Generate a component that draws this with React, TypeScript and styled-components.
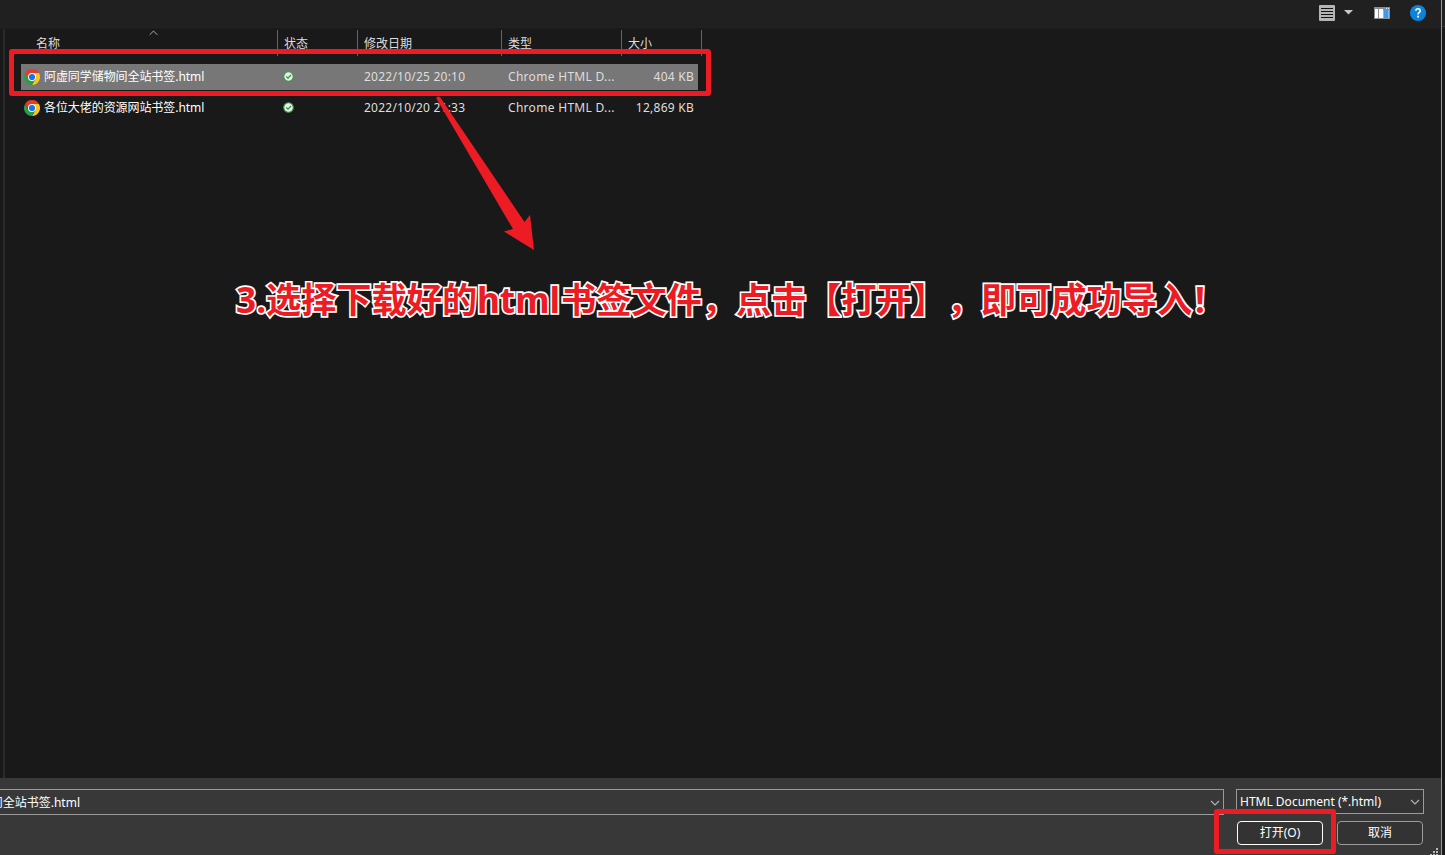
import React from 'react';
import styled, { createGlobalStyle } from 'styled-components';

const Global = createGlobalStyle`
  * { box-sizing: border-box; }
  body { margin: 0; background: #191919; overflow: hidden; }
`;

const Screen = styled.div`
  position: relative;
  display: flex;
  width: 1445px;
  height: 855px;
  overflow: hidden;
  background: #191919;
  color: #fff;
  font: 12px/16px 'Noto Sans', 'Noto Sans CJK SC', sans-serif;
  white-space: nowrap;
`;
const Dialog = styled.div`
  display: flex;
  flex-direction: column;
  width: 1442px;
  border-right: 1px solid #35b9e6;
`;
const Backdrop = styled.div`
  flex: 1;
  background: linear-gradient(#202020 26px, #333 26px, #333 27px, #191919 27px);
`;
const Toolbar = styled.div`
  display: flex;
  align-items: center;
  justify-content: flex-end;
  height: 29px;
  padding: 0 15px 3px 0;
  background: #202020;
  border-bottom: 1px solid #1c1c1c;
`;
const ViewButton = styled.div`
  display: flex;
  align-items: center;
  gap: 9px;
  margin-right: 21px;
`;
const PaneButton = styled.div`
  display: flex;
  margin-right: 20px;
`;
const Browser = styled.div`
  flex: 1;
  display: flex;
`;
const Splitter = styled.div`
  width: 6px;
  border-left: 3px solid #191919;
  border-right: 1px solid #191919;
  background: #2b2b2b;
`;
const FileList = styled.div`
  flex: 1;
  padding: 1px 0 0 15px;
`;
const Header = styled.div`
  position: relative;
  display: flex;
  height: 26px;
  margin-bottom: 8px;
`;
const HeadCell = styled.div<{ $w: number; $pad?: number }>`
  width: ${p => p.$w}px;
  padding: 6px 0 0 ${p => p.$pad ?? 6}px;
  border-right: 1px solid #636363;
  color: #dedede;
`;
const SortMark = styled.svg`
  position: absolute;
  left: 128px;
  top: 0;
`;
const Row = styled.div<{ $selected?: boolean }>`
  display: flex;
  align-items: center;
  width: 677px;
  height: 26px;
  margin-bottom: 5px;
  background: ${p => (p.$selected ? '#777' : 'transparent')};
  color: #dedede;
`;
const NameCell = styled.div`
  display: flex;
  align-items: center;
  gap: 4px;
  width: 262px;
  height: 25px;
  padding-left: 3px;
  color: #fff;
  letter-spacing: -0.07px;
`;
const Cell = styled.div<{ $w: number; $right?: boolean; $ls?: number }>`
  display: flex;
  justify-content: ${p => (p.$right ? 'flex-end' : 'flex-start')};
  width: ${p => p.$w}px;
  letter-spacing: ${p => p.$ls ?? 0}px;
`;
const StatusCell = styled.div`
  display: flex;
  width: 81px;
  padding-bottom: 1px;
`;
const Footer = styled.div`
  height: 77px;
  padding-top: 11px;
  background: #383838;
`;
const FieldRow = styled.div`
  display: flex;
  gap: 12px;
`;
const Combo = styled.div<{ $w: number; $h: number; $open?: boolean }>`
  display: flex;
  align-items: center;
  justify-content: space-between;
  width: ${p => p.$w}px;
  height: ${p => p.$h}px;
  padding: ${p => (p.$open ? '1px 3px 0 0' : '0 3px')};
  border: 1px solid #9b9b9b;
  border-left-width: ${p => (p.$open ? 0 : 1)}px;
  background: ${p => (p.$open ? '#383838' : '#333')};
`;
const ClippedName = styled.div`
  display: flex;
  justify-content: flex-end;
  width: 80px;
  overflow: hidden;
`;
const Actions = styled.div`
  display: flex;
  justify-content: flex-end;
  gap: 14px;
  padding: 6px 18px 0 0;
`;
const Button = styled.button<{ $primary?: boolean }>`
  display: flex;
  align-items: center;
  justify-content: center;
  width: 86px;
  height: 24px;
  padding: 0;
  border: 1px solid ${p => (p.$primary ? '#fff' : '#9b9b9b')};
  border-radius: 4px;
  background: #333;
  color: #fff;
  font: inherit;
`;
const Grip = styled.svg`
  position: absolute;
  left: 1430px;
  top: 848px;
`;
const Highlight = styled.div<{ $x: number; $y: number; $w: number; $h: number }>`
  position: absolute;
  left: ${p => p.$x}px;
  top: ${p => p.$y}px;
  width: ${p => p.$w}px;
  height: ${p => p.$h}px;
  border: 5px solid #ed1c24;
  border-radius: 3px;
`;
const Arrow = styled.svg`
  position: absolute;
  left: 420px;
  top: 80px;
`;
const Caption = styled.div`
  position: absolute;
  left: 236px;
  top: 273px;
  display: flex;
  color: #ed1c24;
  font: 700 35.2px/52px 'Noto Sans', 'Noto Sans CJK SC', sans-serif;
  -webkit-text-stroke: 3.4px #fff;
  paint-order: stroke fill;
  text-spacing-trim: space-all;
`;
const Part = styled.span<{ $w: number; $shift?: number }>`
  width: ${p => p.$w}px;
  padding-left: ${p => p.$shift ?? 0}px;
`;

const Chrome = () => (
  <svg width="16" height="16" viewBox="0 0 48 48">
    <path d="M24 12H44.8A24 24 0 0 1 24 48L34.4 30Z" fill="#fcc31e" />
    <path d="M3.2 12L13.6 30L34.4 30L24 48A24 24 0 0 1 3.2 12Z" fill="#2a9d48" />
    <path d="M3.2 12A24 24 0 0 1 44.8 12H24L13.6 30Z" fill="#e33b2e" />
    <circle cx="24" cy="24" r="12" fill="#fff" />
    <circle cx="24" cy="24" r="9.3" fill="#1a73e8" />
  </svg>
);
const Synced = () => (
  <svg width="11" height="11" viewBox="0 0 11 11">
    <circle cx="5.5" cy="5.5" r="4.8" fill="#e4f0e4" stroke="#38924a" strokeWidth="1.1" />
    <path d="M3.2 5.6L5 7.2L8 4" fill="none" stroke="#38924a" strokeWidth="1.3" />
  </svg>
);
const Chevron = () => (
  <svg width="10" height="6" viewBox="0 0 10 6">
    <path d="M1 1L5 5L9 1" fill="none" stroke="#b5b5b5" strokeWidth="1.1" />
  </svg>
);

const files = [
  { name: '阿虚同学储物间全站书签.html', date: '2022/10/25 20:10', size: '404 KB', selected: true },
  { name: '各位大佬的资源网站书签.html', date: '2022/10/20 21:33', size: '12,869 KB', selected: false },
];

export default function App() {
  return (
    <Screen>
      <Global />
      <Dialog>
        <Toolbar>
          <ViewButton>
            <svg width="16" height="16" viewBox="0 0 16 16">
              <rect width="16" height="16" rx="1" fill="#b4b4b4" />
              <path d="M2 3.5H14M2 6.5H14M2 9.5H14M2 12.5H14" stroke="#111" />
            </svg>
            <svg width="9" height="5" viewBox="0 0 9 5"><path d="M0 0H9L4.5 4.6Z" fill="#c8c8c8" /></svg>
          </ViewButton>
          <PaneButton>
            <svg width="16" height="12" viewBox="0 0 16 12">
              <rect width="16" height="12" fill="#8b8e91" />
              <path d="M1 2H4V11H1ZM5 2H9V11H5Z" fill="#fff" />
              <path d="M9 3H15V11H9Z" fill="#3d9be9" />
              <path d="M9.5 3V11M14.5 3V11" stroke="#7abdf4" />
              <path d="M12 1.5H13M14 1.5H15" stroke="#ddd" />
            </svg>
          </PaneButton>
          <svg width="16" height="16" viewBox="0 0 16 16">
            <circle cx="8" cy="8" r="8" fill="#0c84dc" />
            <path d="M5.9 5.7C5.9 3.1 10.2 3.1 10.2 5.7C10.2 7.4 8.1 7.3 8.1 9.5" fill="none" stroke="#fff" strokeWidth="1.6" />
            <rect x="7.2" y="10.7" width="1.8" height="1.8" fill="#fff" />
          </svg>
        </Toolbar>
        <Browser>
          <Splitter />
          <FileList>
            <Header>
              <HeadCell $w={257} $pad={15}>名称</HeadCell>
              <HeadCell $w={80}>状态</HeadCell>
              <HeadCell $w={144}>修改日期</HeadCell>
              <HeadCell $w={120}>类型</HeadCell>
              <HeadCell $w={80}>大小</HeadCell>
              <SortMark width="9" height="6" viewBox="0 0 9 6">
                <path d="M.7 4.8L4.5 1L8.3 4.8" fill="none" stroke="#aaa" />
              </SortMark>
            </Header>
            {files.map(f => (
              <Row key={f.name} $selected={f.selected}>
                <NameCell><Chrome />{f.name}</NameCell>
                <StatusCell><Synced /></StatusCell>
                <Cell $w={144} $ls={0.23}>{f.date}</Cell>
                <Cell $w={110} $ls={0.3}>Chrome HTML D...</Cell>
                <Cell $w={76} $right $ls={0.25}>{f.size}</Cell>
              </Row>
            ))}
          </FileList>
        </Browser>
        <Footer>
          <FieldRow>
            <Combo $w={1224} $h={26} $open>
              <ClippedName>间全站书签.html</ClippedName>
              <Chevron />
            </Combo>
            <Combo $w={188} $h={25}>
              HTML Document (*.html)
              <Chevron />
            </Combo>
          </FieldRow>
          <Actions>
            <Button $primary>打开(O)</Button>
            <Button>取消</Button>
          </Actions>
        </Footer>
      </Dialog>
      <Backdrop />
      <Grip width="9" height="8" viewBox="0 0 9 8">
        <path d="M6 1H8M3 4H5M6 4H8M0 7H2M3 7H5M6 7H8" stroke="#b8b8b8" strokeWidth="2" />
      </Grip>
      <Highlight $x={9} $y={49} $w={702} $h={47} />
      <Highlight $x={1214} $y={809} $w={122} $h={45} />
      <Arrow width="130" height="180" viewBox="0 0 130 180">
        <path d="M16.3 18.5Q16.5 15.5 20 17L104.5 142L110 135L114 170L84 151.5L93 149Z" fill="#ed1c24" />
      </Arrow>
      <Caption>
        <Part $w={30}>3.</Part>
        <Part $w={211}>选择下载好的</Part>
        <Part $w={84}>html</Part>
        <Part $w={175}>书签文件，</Part>
        <Part $w={70}>点击</Part>
        <Part $w={141}>【打开】</Part>
        <Part $w={34}>，</Part>
        <Part $w={212}>即可成功导入</Part>
        <Part $w={16} $shift={2}>!</Part>
      </Caption>
    </Screen>
  );
}
